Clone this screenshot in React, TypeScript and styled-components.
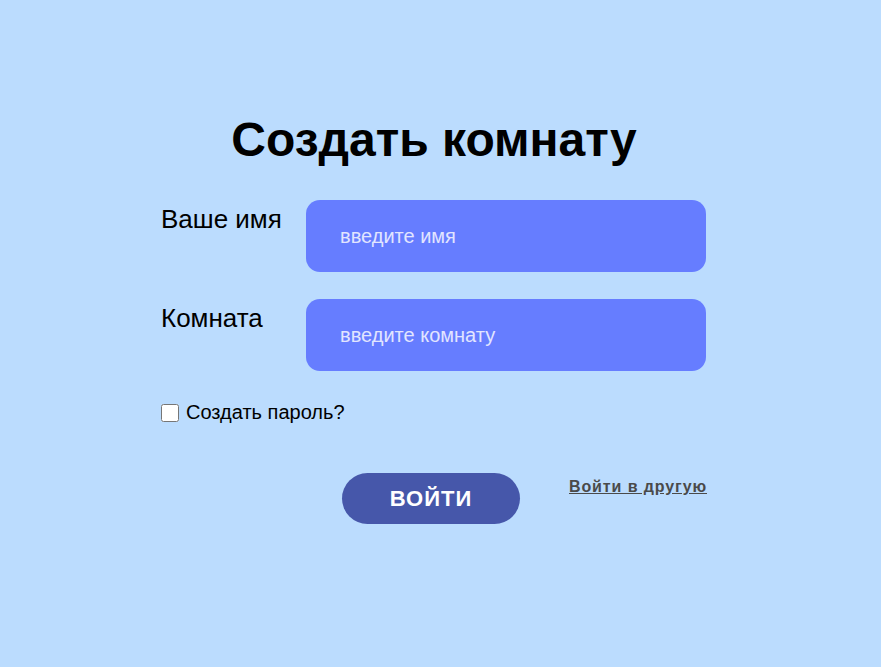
import React from 'react';
import styled, { createGlobalStyle } from 'styled-components';

const GlobalStyle = createGlobalStyle`
  html, body {
    margin: 0;
    padding: 0;
    background: #bbdcfe;
    font-family: "Liberation Sans", Arial, sans-serif;
  }
`;

const Page = styled.div`
  min-height: 667px;
  padding: 112px 0 0 161px;
  box-sizing: border-box;
`;

const Form = styled.form`
  width: 546px;
  display: flex;
  flex-direction: column;
`;

const Title = styled.h1`
  margin: 0 0 33px;
  text-align: center;
  font-size: 48px;
  font-weight: 700;
  color: #000;
`;

const Row = styled.div`
  display: flex;
  align-items: flex-start;
  gap: 0;
  margin-bottom: 27px;
`;

const Label = styled.label`
  width: 145px;
  font-size: 26px;
  color: #000;
  padding-top: 4px;
`;

const Input = styled.input`
  width: 400px;
  height: 72px;
  box-sizing: border-box;
  border: none;
  border-radius: 14px;
  background: #667dff;
  padding: 0 34px;
  font-family: inherit;
  font-size: 20px;
  color: #fff;
  outline: none;

  &::placeholder {
    color: #e2e5ff;
  }
`;

const CheckRow = styled.label`
  display: flex;
  align-items: center;
  gap: 7px;
  margin-top: 3px;
  font-size: 20px;
  color: #000;
`;

const Checkbox = styled.input`
  width: 18px;
  height: 18px;
  margin: 0;
`;

const Actions = styled.div`
  display: flex;
  align-items: flex-start;
  justify-content: space-between;
  padding-left: 181px;
  margin-top: 49px;
`;

const Submit = styled.button`
  width: 178px;
  height: 51px;
  border: none;
  border-radius: 26px;
  background: #4657aa;
  color: #fff;
  font-family: inherit;
  font-size: 22px;
  font-weight: 700;
  letter-spacing: 1px;
  cursor: pointer;
`;

const OtherLink = styled.a`
  margin-top: 5px;
  font-size: 16px;
  font-weight: 700;
  letter-spacing: 0.9px;
  color: #4a4a4a;
  text-decoration: underline;
`;

export default function App() {
  return (
    <>
      <GlobalStyle />
      <Page>
        <Form onSubmit={(e) => e.preventDefault()}>
          <Title>Создать комнату</Title>
          <Row>
            <Label htmlFor="name">Ваше имя</Label>
            <Input id="name" placeholder="введите имя" />
          </Row>
          <Row>
            <Label htmlFor="room">Комната</Label>
            <Input id="room" placeholder="введите комнату" />
          </Row>
          <CheckRow>
            <Checkbox type="checkbox" />
            Создать пароль?
          </CheckRow>
          <Actions>
            <Submit type="submit">ВОЙТИ</Submit>
            <OtherLink href="#">Войти в другую</OtherLink>
          </Actions>
        </Form>
      </Page>
    </>
  );
}
